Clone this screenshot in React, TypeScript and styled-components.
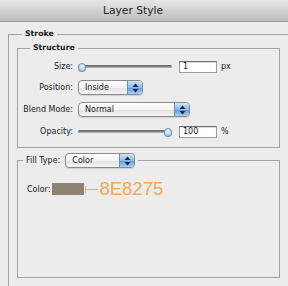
import React from 'react';
import styled, { createGlobalStyle } from 'styled-components';

const Global = createGlobalStyle`
  html, body { margin: 0; padding: 0; background: #ececec; }
  body { font-family: "DejaVu Sans", "Liberation Sans", sans-serif; color: #1a1a1a; }
  * { box-sizing: border-box; }
`;

const Window = styled.div`
  width: 288px;
  height: 286px;
  overflow: hidden;
  background: #ececec;
  display: flex;
  flex-direction: column;
`;

const TitleBar = styled.div`
  flex: none;
  height: 22px;
  background: linear-gradient(#e6e6e6, #bdbdbd);
  border-bottom: 1px solid #9c9c9c;
  display: flex;
  align-items: center;
  padding-left: 103px;
  font-size: 10.7px;
  color: #1e1e1e;
`;

const Body = styled.div`
  padding: 7px 0 0 8px;
`;

const Group = styled.fieldset<{ $width: number }>`
  margin: 0;
  padding: 0;
  min-width: 0;
  width: ${p => p.$width}px;
  border: 1px solid #a3a3a3;
`;

const Legend = styled.legend<{ $offset: number }>`
  margin-left: ${p => p.$offset}px;
  padding: 0 3px;
  font-size: 7.8px;
  font-weight: bold;
  line-height: 10px;
  color: #1a1a1a;
`;

const FillLegend = styled.legend`
  margin-left: 5px;
  padding: 0 3px 0 3px;
  display: flex;
  align-items: center;
  gap: 5px;
  height: 15px;
`;

const OuterContent = styled.div`
  padding: 4px 0 30px 8px;
  display: flex;
  flex-direction: column;
  gap: 5px;
`;

const StructureGrid = styled.div`
  padding: 6px 0 8px 0;
  display: grid;
  grid-template-columns: 55px 1fr;
  grid-template-rows: 15px 15px 17px 15px;
  column-gap: 5px;
  row-gap: 6px;
  align-items: center;
`;

const Label = styled.span`
  font-size: 8px;
  text-align: right;
  white-space: nowrap;
  color: #1a1a1a;
`;

const Controls = styled.div`
  display: flex;
  align-items: center;
`;

const SliderBox = styled.div`
  position: relative;
  width: 94px;
  height: 10px;
  flex: none;
  display: flex;
  align-items: center;
`;

const Track = styled.div`
  width: 100%;
  height: 3px;
  border-radius: 2px;
  background: linear-gradient(#5e5e5e, #8a8a8a 60%, #c4c4c4);
`;

const Knob = styled.div`
  position: absolute;
  top: 1px;
  width: 8px;
  height: 9px;
  margin-left: -4px;
  border-radius: 50% 50% 45% 45%;
  border: 1px solid #7897bf;
  background: radial-gradient(circle at 50% 35%, #f0f7fe 0%, #b6d5f3 55%, #7eaee3 100%);
`;

const NumberBox = styled.div`
  width: 38px;
  height: 12px;
  margin-left: 7px;
  flex: none;
  background: #fff;
  border: 1px solid #9a9a9a;
  border-top-color: #6e6e6e;
  box-shadow: inset 0 1px 1px rgba(0,0,0,0.15);
  font-size: 8px;
  line-height: 10px;
  padding-left: 3px;
  color: #1a1a1a;
`;

const Unit = styled.span`
  margin-left: 4px;
  font-size: 8px;
  color: #1a1a1a;
`;

const Popup = styled.div<{ $width: number }>`
  width: ${p => p.$width}px;
  height: 15px;
  border: 1px solid #8a8a8a;
  border-radius: 4px;
  background: linear-gradient(#ffffff, #f3f3f3 50%, #e2e2e2 51%, #f4f4f4);
  display: flex;
  align-items: stretch;
  overflow: hidden;
  box-shadow: 0 1px 1px rgba(0,0,0,0.12);
`;

const PopupText = styled.span`
  flex: 1;
  padding-left: 6px;
  font-size: 8px;
  line-height: 13px;
  color: #1a1a1a;
`;

const PopupArrows = styled.span`
  width: 15px;
  flex: none;
  border-left: 1px solid #6c8fbf;
  background: linear-gradient(#cfe3f8, #8fbaeb 50%, #5f99e0 51%, #a7d0f6);
  display: flex;
  align-items: center;
  justify-content: center;
`;

const FillContent = styled.div`
  height: 109px;
  padding: 15px 0 0 9px;
`;

const ColorRow = styled.div`
  display: flex;
  align-items: center;
  height: 12px;
`;

const Swatch = styled.div<{ $color: string }>`
  width: 32px;
  height: 12px;
  margin-left: 2px;
  background: ${p => p.$color};
`;

const Connector = styled.div`
  width: 13px;
  height: 7px;
  margin-left: 1px;
  flex: none;
  border-left: 1px solid #f2a860;
  display: flex;
  align-items: center;
  &::after {
    content: '';
    display: block;
    width: 100%;
    height: 1px;
    background: #f2a860;
  }
`;

const HexNote = styled.span`
  margin-left: 1px;
  font-family: "Liberation Sans", Arial, sans-serif;
  font-size: 18.5px;
  line-height: 14px;
  color: #f2a860;
`;

const Arrows = () => (
  <svg width="7" height="10" viewBox="0 0 7 10">
    <path d="M3.5 0.5 L6.5 4 L0.5 4 Z" fill="#1b2c45" />
    <path d="M3.5 9.5 L6.5 6 L0.5 6 Z" fill="#1b2c45" />
  </svg>
);

const Select = ({ value, width }: { value: string; width: number }) => (
  <Popup $width={width}>
    <PopupText>{value}</PopupText>
    <PopupArrows><Arrows /></PopupArrows>
  </Popup>
);

const Slider = ({ value }: { value: number }) => (
  <SliderBox>
    <Track />
    <Knob style={{ left: `${value * 100}%` }} />
  </SliderBox>
);

export default function App() {
  return (
    <Window>
      <Global />
      <TitleBar>Layer Style</TitleBar>
      <Body>
        <Group $width={300}>
          <Legend $offset={13}>Stroke</Legend>
          <OuterContent>
            <Group $width={263}>
              <Legend $offset={12}>Structure</Legend>
              <StructureGrid>
                <Label>Size:</Label>
                <Controls>
                  <Slider value={0.04} />
                  <NumberBox>1</NumberBox>
                  <Unit>px</Unit>
                </Controls>
                <Label>Position:</Label>
                <Controls>
                  <Select value="Inside" width={65} />
                </Controls>
                <Label>Blend Mode:</Label>
                <Controls>
                  <Select value="Normal" width={112} />
                </Controls>
                <Label>Opacity:</Label>
                <Controls>
                  <Slider value={0.96} />
                  <NumberBox>100</NumberBox>
                  <Unit>%</Unit>
                </Controls>
              </StructureGrid>
            </Group>
            <Group $width={263}>
              <FillLegend>
                <Label>Fill Type:</Label>
                <Select value="Color" width={70} />
              </FillLegend>
              <FillContent>
                <ColorRow>
                  <Label>Color:</Label>
                  <Swatch $color="#8e8275" />
                  <Connector />
                  <HexNote>8E8275</HexNote>
                </ColorRow>
              </FillContent>
            </Group>
          </OuterContent>
        </Group>
      </Body>
    </Window>
  );
}
